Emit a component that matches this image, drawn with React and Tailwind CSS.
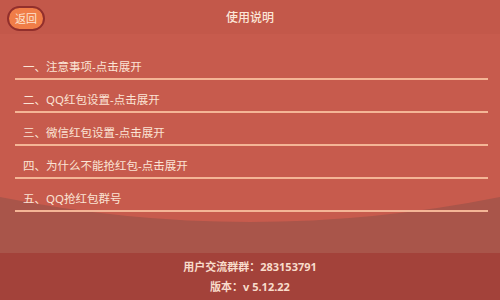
import React from "react";

const rows = [
  "一、注意事项-点击展开",
  "二、QQ红包设置-点击展开",
  "三、微信红包设置-点击展开",
  "四、为什么不能抢红包-点击展开",
  "五、QQ抢红包群号",
];

export default function App() {
  return (
    <div
      className="relative w-[500px] h-[300px] overflow-hidden bg-[#c75b4d] flex flex-col"
      style={{ fontFamily: '"Noto Sans", "Noto Sans CJK SC", sans-serif' }}
    >
      <svg className="absolute left-0 top-0" width="500" height="300" viewBox="0 0 500 300">
        <path d="M0 197 Q250 247 500 197 L500 300 L0 300 Z" fill="#a9554a" />
      </svg>

      <div className="relative h-[34px] flex items-center justify-center bg-[#c3584a]">
        <div className="absolute left-[7px] top-[6px] w-[38px] h-[25px] rounded-full border-2 border-[#922f2c] bg-[#f07d48] flex items-center justify-center">
          <span className="text-[11px] leading-none text-[#fde4d2]">返回</span>
        </div>
        <span className="text-[12px] font-medium text-[#fbe6d8] mt-[1px]">使用说明</span>
      </div>

      <div className="relative flex flex-col pt-[13px] pl-[15px] pr-[12px]">
        {rows.map((r) => (
          <div
            key={r}
            className="h-[33px] flex items-end pb-[3px] pl-[8px] border-b-2 border-[#f4b596]"
          >
            <span className="text-[11.5px] leading-[16px] text-[#fbe4d5]">{r}</span>
          </div>
        ))}
      </div>

      <div className="relative mt-auto h-[47px] bg-[#a3423a] flex flex-col items-center pt-[4px]">
        <span className="text-[11px] leading-[20px] font-bold text-[#f8dccb]">用户交流群群：283153791</span>
        <span className="text-[11px] leading-[20px] font-bold text-[#f8dccb]">版本：v 5.12.22</span>
      </div>
    </div>
  );
}
